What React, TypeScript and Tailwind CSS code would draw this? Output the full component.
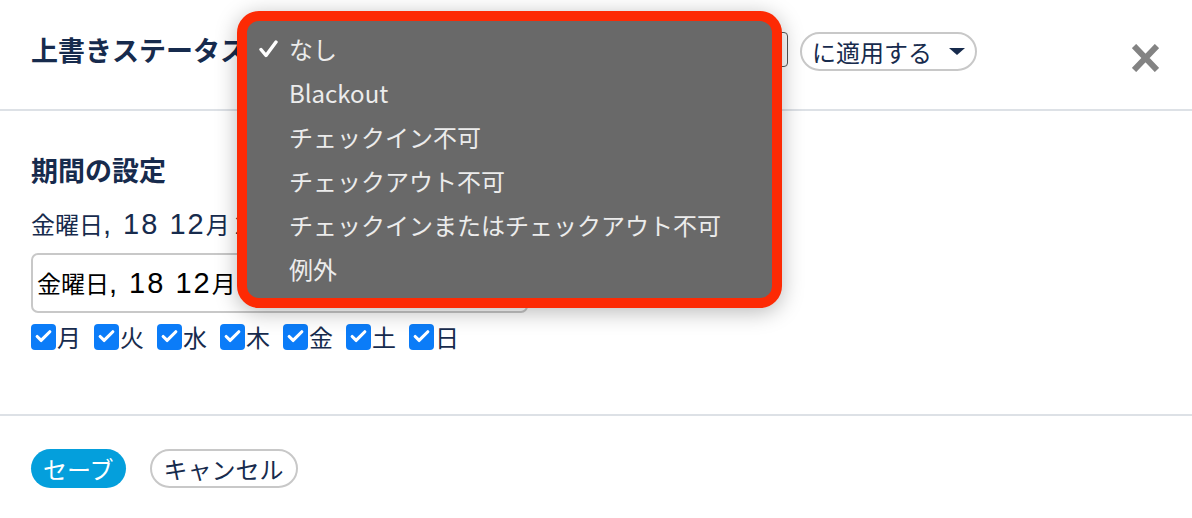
import { Check } from "lucide-react";

const options = [
  "なし",
  "Blackout",
  "チェックイン不可",
  "チェックアウト不可",
  "チェックインまたはチェックアウト不可",
  "例外",
];

const days = ["月", "火", "水", "木", "金", "土", "日"];

function CheckBox() {
  return (
    <span className="w-[25px] h-[26px] rounded-[4px] bg-[#0b7cf8] flex items-center justify-center">
      <Check className="w-[19px] h-[19px] text-white" strokeWidth={4} />
    </span>
  );
}

// Latin part of the date is drawn larger/wider, like the mac system font in the shot
function DateText() {
  return (
    <>
      金曜日
      <span className="font-['Liberation_Sans',sans-serif] text-[29px] leading-none tracking-[2px]">, 18 12</span>
      月 2020
    </>
  );
}

export default function App() {
  return (
    <div className="relative w-full h-[518px] bg-white overflow-hidden font-['Noto_Sans_CJK_JP','Noto_Sans',sans-serif] text-[#172b4d]">
      {/* Header */}
      <div className="h-[111px] border-b-2 border-[#dde1e6] flex items-start px-[31px] pt-[32px]">
        <h1 className="text-[27px] leading-[36px] font-bold whitespace-nowrap">上書きステータス</h1>
        <div className="ml-[10px] w-[531px] h-[35px] border border-[#555] rounded-[4px] flex items-center px-2 text-[22px]">
          なし
        </div>
        <button className="ml-[12px] w-[177px] h-[39px] border-2 border-[#c8c8c8] rounded-full flex items-center pl-[10px] text-[24px] leading-none">
          に適用する
          <svg width="16" height="7" viewBox="0 0 16 7" className="ml-[17px]">
            <path d="M0 0 H16 L8 7 Z" fill="#172b4d" />
          </svg>
        </button>
        <svg width="27" height="28" viewBox="0 0 27 28" className="ml-auto mr-[2px] mt-[12px]">
          <path d="M2 2 L25 26 M25 2 L2 26" stroke="#838383" strokeWidth="6" />
        </svg>
      </div>

      {/* Body */}
      <div className="px-[31px] pt-[41px] pb-[64px] border-b-2 border-[#dde1e6]">
        <h2 className="text-[27px] leading-[36px] font-bold">期間の設定</h2>
        <p className="mt-[19px] h-[34px] text-[24px] leading-[34px] whitespace-nowrap">
          <DateText />
        </p>
        <div className="mt-[12px] w-[497px] h-[60px] border-2 border-[#c8c8c8] rounded-[7px] flex items-center pl-[4px] text-[24px] text-black whitespace-nowrap">
          <span>
            <DateText />
          </span>
        </div>
        <div className="mt-[10px] flex gap-[13px] h-[27px]">
          {days.map((d) => (
            <label key={d} className="flex items-center text-[24px] leading-none">
              <CheckBox />
              <span className="ml-[1px]">{d}</span>
            </label>
          ))}
        </div>
      </div>

      {/* Footer */}
      <div className="px-[31px] pt-[33px] flex gap-[24px]">
        <button className="h-[39px] px-[12px] rounded-full bg-[#049fdc] text-white text-[24px] leading-none">
          セーブ
        </button>
        <button className="h-[39px] px-[12px] rounded-full border-2 border-[#c8c8c8] text-[24px] leading-none">
          キャンセル
        </button>
      </div>

      {/* Open select menu */}
      <div className="absolute left-[237px] top-[11px] w-[545px] h-[297px] rounded-[22px] border-[10px] border-[#fd2a04] bg-[#696969] pt-[6px] shadow-[0_4px_22px_rgba(0,0,0,0.28)]">
        {options.map((o, i) => (
          <div key={o} className="h-[44px] flex items-center text-[24px] text-[#ececec]">
            <span className="w-[42px] flex justify-end pr-[11px]">
              {i === 0 && (
                <svg width="19" height="18" viewBox="0 0 19 18">
                  <path d="M2 9.5 L7 15.5 L17 2" stroke="white" strokeWidth="3.4" fill="none" strokeLinecap="round" strokeLinejoin="round" />
                </svg>
              )}
            </span>
            {o}
          </div>
        ))}
      </div>
    </div>
  );
}
